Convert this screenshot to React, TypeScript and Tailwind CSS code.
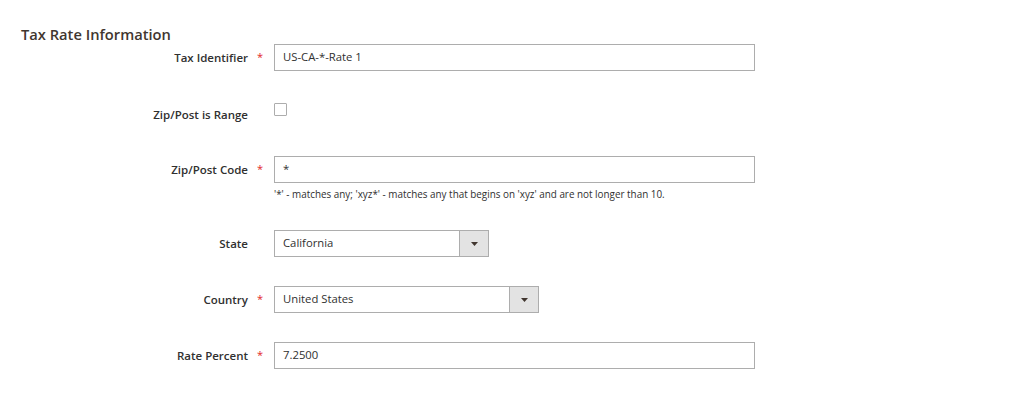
import React from 'react';

const font = { fontFamily: '"Open Sans", "Liberation Sans", sans-serif' };

const Label: React.FC<{ text: string; required?: boolean; className?: string }> = ({ text, required, className }) => (
  <div className={`flex shrink-0 ${className ?? 'items-center'}`}>
    <span className="w-[249px] pr-px text-right text-[11.5px] font-semibold text-[#303030]">{text}</span>
    <span className="w-[25px] pl-[8px] text-[11px] text-[#e22626]">{required ? '*' : ''}</span>
  </div>
);

const TextInput: React.FC<{ value: string }> = ({ value }) => (
  <div className="flex h-[27px] w-[481px] items-center border border-[#adadad] bg-white px-[8px] text-[11.3px] text-[#303030]">
    {value}
  </div>
);

const Select: React.FC<{ value: string; width: string }> = ({ value, width }) => (
  <div className={`flex h-[27px] ${width} border border-[#adadad] bg-white text-[11.3px] text-[#303030]`}>
    <div className="flex flex-1 items-center px-[8px]">{value}</div>
    <div className="flex w-[29px] items-center justify-center border-l border-[#adadad] bg-[#e3e3e3]">
      <svg width="7" height="4" viewBox="0 0 7 4">
        <path d="M0 0 H7 L3.5 4 Z" fill="#41362f" />
      </svg>
    </div>
  </div>
);

const App: React.FC = () => {
  return (
    <div className="h-[416px] w-[1024px] bg-white" style={font}>
      <div className="pl-[21px] pt-[24px]">
        <h2 className="text-[14.7px] leading-[20px] font-semibold text-[#41362f]">Tax Rate Information</h2>
      </div>
      <div className="flex h-[27px] items-center">
        <Label text="Tax Identifier" required />
        <TextInput value="US-CA-*-Rate 1" />
      </div>
      <div className="mt-[29px] flex h-[27px]">
        <Label text="Zip/Post is Range" className="items-end pb-[4px]" />
        <div className="pt-[3px]">
          <div className="h-[13px] w-[13px] rounded-[1px] border border-[#adadad] bg-white" />
        </div>
      </div>
      <div className="mt-[29px] flex items-start">
        <div className="flex h-[27px] items-center">
          <Label text="Zip/Post Code" required />
        </div>
        <div>
          <TextInput value="*" />
          <p className="mt-[5px] text-[9.9px] leading-[13px] text-[#303030]">
            '*' - matches any; 'xyz*' - matches any that begins on 'xyz' and are not longer than 10.
          </p>
        </div>
      </div>
      <div className="mt-[29px] flex h-[27px] items-center">
        <Label text="State" />
        <Select value="California" width="w-[215px]" />
      </div>
      <div className="mt-[29px] flex h-[27px] items-center">
        <Label text="Country" required />
        <Select value="United States" width="w-[265px]" />
      </div>
      <div className="mt-[29px] flex h-[27px] items-center">
        <Label text="Rate Percent" required />
        <TextInput value="7.2500" />
      </div>
    </div>
  );
};

export default App;
